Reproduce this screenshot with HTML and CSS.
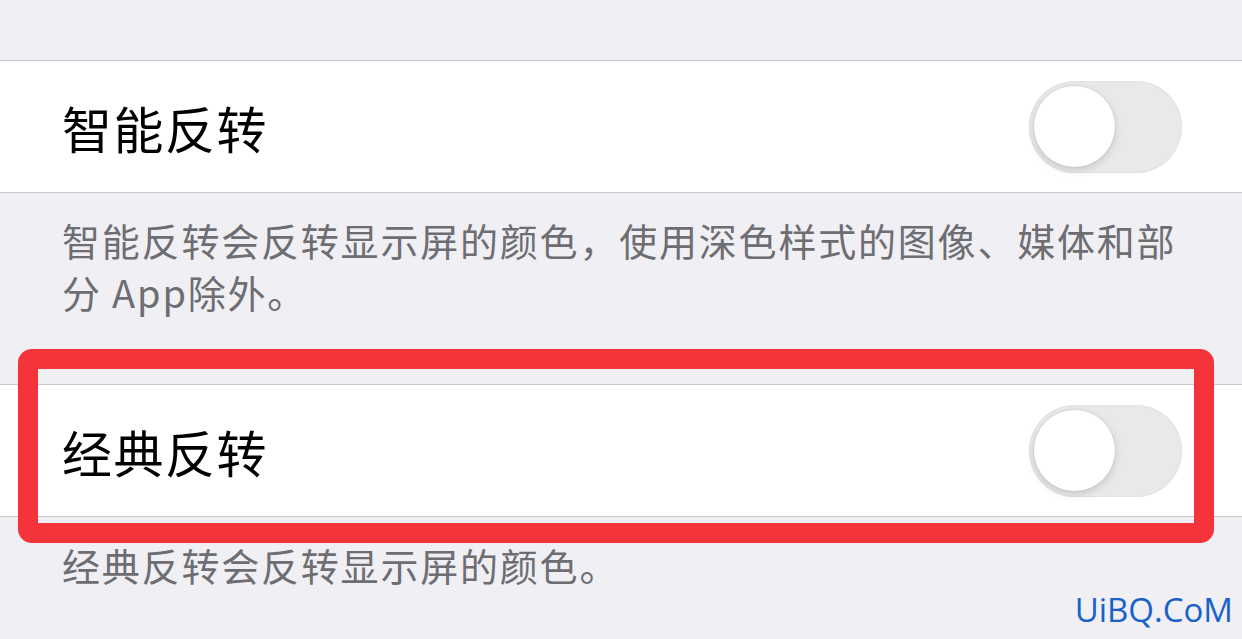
FILE: index.html
```html
<!DOCTYPE html>
<html lang="zh-CN">
<head>
    <meta charset="UTF-8">
    <meta name="viewport" content="width=device-width, initial-scale=1.0">
    <title>反转颜色</title>
    <link rel="stylesheet" href="styles.css">
</head>
<body>
    <div class="top-space"></div>

    <div class="group">
        <div class="cell">
            <span class="cell-title">智能反转</span>
            <div class="switch"><div class="knob"></div></div>
        </div>
    </div>
    <div class="footer footer-first">智能反转会反转显示屏的颜色，使用深色样式的图像、媒体和部分 App除外。</div>

    <div class="group marked">
        <div class="cell">
            <span class="cell-title">经典反转</span>
            <div class="switch"><div class="knob"></div></div>
        </div>
        <div class="highlight"></div>
    </div>
    <div class="footer footer-second">经典反转会反转显示屏的颜色。</div>

    <div class="watermark">UiBQ.CoM</div>
</body>
</html>
```

FILE: styles.css
```css
body {
    margin: 0;
    background: #efeff4;
    font-family: "Noto Sans CJK SC", "Noto Sans", sans-serif;
    width: 1242px;
    height: 639px;
    overflow: hidden;
    position: relative;
}
.top-space {
    height: 60px;
}
.group {
    background: #fff;
    border-top: 1px solid #c8c7cc;
    border-bottom: 1px solid #c8c7cc;
}
.marked {
    position: relative;
}
.cell {
    height: 131px;
    display: flex;
    align-items: center;
    justify-content: space-between;
    padding: 0 60px 0 62px;
}
.cell-title {
    font-size: 50px;
    letter-spacing: 1.5px;
    color: #000;
}
.switch {
    width: 153px;
    height: 92px;
    border-radius: 46px;
    background: #e9e9eb;
    box-shadow: inset 0 0 0 1px #e2e2e4;
    display: flex;
    align-items: center;
    padding-left: 5px;
    box-sizing: border-box;
}
.knob {
    width: 81px;
    height: 81px;
    border-radius: 50%;
    background: #fff;
    box-shadow: 0 3px 8px rgba(0,0,0,0.15), 0 0 0 1px rgba(0,0,0,0.04);
}
.footer {
    color: #6d6d72;
    font-size: 38px;
    letter-spacing: 1.8px;
    line-height: 52px;
    padding: 0 40px 0 62px;
}
.footer-first {
    padding-top: 21px;
    padding-bottom: 66px;
}
.footer-second {
    padding-top: 22px;
}
.highlight {
    position: absolute;
    top: -36px;
    left: 18px;
    right: 28px;
    bottom: -27px;
    border: 20px solid #f5333a;
    border-radius: 14px;
}
.watermark {
    position: absolute;
    right: 9px;
    bottom: 7px;
    font-family: "Open Sans", sans-serif;
    font-size: 33px;
    color: #1a62c9;
}
```
